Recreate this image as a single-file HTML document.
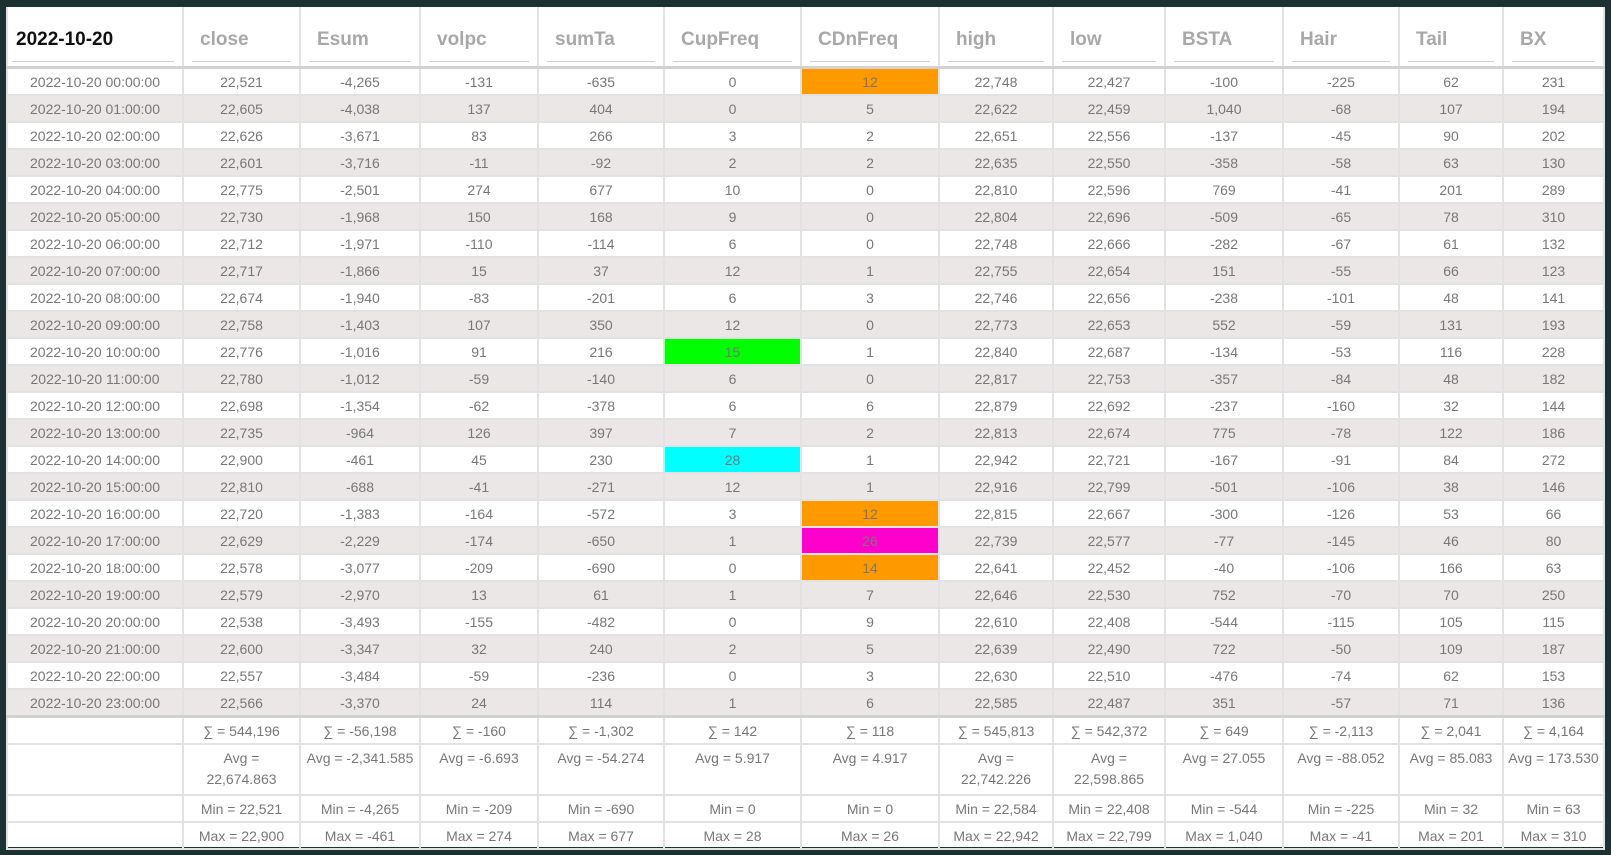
<!DOCTYPE html>
<html><head><meta charset="utf-8"><style>
html,body{margin:0;padding:0;background:#1c3232;width:1611px;height:855px;overflow:hidden}
.wrap{position:absolute;left:6px;top:7px;width:1597px;height:840px;background:#fff}
table{border-collapse:collapse;table-layout:fixed;width:1597px;font-family:"Liberation Sans",sans-serif}
td,th{border:2px solid #e2e2e2;padding:0;text-align:center;color:#777;font-size:14px;font-weight:normal;overflow:hidden;white-space:nowrap}
th{height:59px;border-top:none;border-bottom:3px solid #d2d2d2;vertical-align:top;text-align:left}
th div{margin:21px 8px 0 8px;padding:0 0 10px 8px;border-bottom:1px solid #d0d0d0;font-size:19px;font-weight:bold;color:#a8a8a8;height:23px;line-height:23px}
th.f div{color:#111;margin-left:4px;padding-left:4px}
tbody tr.d td{height:25px}
tbody tr.d:nth-child(even) td{background:#ebe7e6}
tr.last td{border-bottom:3px solid #d2d2d2}
.o{background:#ff9900!important}.m{background:#ff00cc!important}.g{background:#00ff00!important}.c{background:#00ffff!important}
tr.ft td{height:25px}
tr.avg td{height:46px;vertical-align:top;white-space:normal;line-height:21px;padding-top:3px}
</style></head><body><div class="wrap"><table>
<colgroup><col style="width:176px"><col style="width:117px"><col style="width:120px"><col style="width:118px"><col style="width:126px"><col style="width:137px"><col style="width:138px"><col style="width:114px"><col style="width:112px"><col style="width:118px"><col style="width:116px"><col style="width:104px"><col style="width:101px"></colgroup>
<thead><tr><th class="f"><div>2022-10-20</div></th><th><div>close</div></th><th><div>Esum</div></th><th><div>volpc</div></th><th><div>sumTa</div></th><th><div>CupFreq</div></th><th><div>CDnFreq</div></th><th><div>high</div></th><th><div>low</div></th><th><div>BSTA</div></th><th><div>Hair</div></th><th><div>Tail</div></th><th><div>BX</div></th></tr></thead>
<tbody>
<tr class="d"><td>2022-10-20 00:00:00</td><td>22,521</td><td>-4,265</td><td>-131</td><td>-635</td><td>0</td><td class="o">12</td><td>22,748</td><td>22,427</td><td>-100</td><td>-225</td><td>62</td><td>231</td></tr>
<tr class="d"><td>2022-10-20 01:00:00</td><td>22,605</td><td>-4,038</td><td>137</td><td>404</td><td>0</td><td>5</td><td>22,622</td><td>22,459</td><td>1,040</td><td>-68</td><td>107</td><td>194</td></tr>
<tr class="d"><td>2022-10-20 02:00:00</td><td>22,626</td><td>-3,671</td><td>83</td><td>266</td><td>3</td><td>2</td><td>22,651</td><td>22,556</td><td>-137</td><td>-45</td><td>90</td><td>202</td></tr>
<tr class="d"><td>2022-10-20 03:00:00</td><td>22,601</td><td>-3,716</td><td>-11</td><td>-92</td><td>2</td><td>2</td><td>22,635</td><td>22,550</td><td>-358</td><td>-58</td><td>63</td><td>130</td></tr>
<tr class="d"><td>2022-10-20 04:00:00</td><td>22,775</td><td>-2,501</td><td>274</td><td>677</td><td>10</td><td>0</td><td>22,810</td><td>22,596</td><td>769</td><td>-41</td><td>201</td><td>289</td></tr>
<tr class="d"><td>2022-10-20 05:00:00</td><td>22,730</td><td>-1,968</td><td>150</td><td>168</td><td>9</td><td>0</td><td>22,804</td><td>22,696</td><td>-509</td><td>-65</td><td>78</td><td>310</td></tr>
<tr class="d"><td>2022-10-20 06:00:00</td><td>22,712</td><td>-1,971</td><td>-110</td><td>-114</td><td>6</td><td>0</td><td>22,748</td><td>22,666</td><td>-282</td><td>-67</td><td>61</td><td>132</td></tr>
<tr class="d"><td>2022-10-20 07:00:00</td><td>22,717</td><td>-1,866</td><td>15</td><td>37</td><td>12</td><td>1</td><td>22,755</td><td>22,654</td><td>151</td><td>-55</td><td>66</td><td>123</td></tr>
<tr class="d"><td>2022-10-20 08:00:00</td><td>22,674</td><td>-1,940</td><td>-83</td><td>-201</td><td>6</td><td>3</td><td>22,746</td><td>22,656</td><td>-238</td><td>-101</td><td>48</td><td>141</td></tr>
<tr class="d"><td>2022-10-20 09:00:00</td><td>22,758</td><td>-1,403</td><td>107</td><td>350</td><td>12</td><td>0</td><td>22,773</td><td>22,653</td><td>552</td><td>-59</td><td>131</td><td>193</td></tr>
<tr class="d"><td>2022-10-20 10:00:00</td><td>22,776</td><td>-1,016</td><td>91</td><td>216</td><td class="g">15</td><td>1</td><td>22,840</td><td>22,687</td><td>-134</td><td>-53</td><td>116</td><td>228</td></tr>
<tr class="d"><td>2022-10-20 11:00:00</td><td>22,780</td><td>-1,012</td><td>-59</td><td>-140</td><td>6</td><td>0</td><td>22,817</td><td>22,753</td><td>-357</td><td>-84</td><td>48</td><td>182</td></tr>
<tr class="d"><td>2022-10-20 12:00:00</td><td>22,698</td><td>-1,354</td><td>-62</td><td>-378</td><td>6</td><td>6</td><td>22,879</td><td>22,692</td><td>-237</td><td>-160</td><td>32</td><td>144</td></tr>
<tr class="d"><td>2022-10-20 13:00:00</td><td>22,735</td><td>-964</td><td>126</td><td>397</td><td>7</td><td>2</td><td>22,813</td><td>22,674</td><td>775</td><td>-78</td><td>122</td><td>186</td></tr>
<tr class="d"><td>2022-10-20 14:00:00</td><td>22,900</td><td>-461</td><td>45</td><td>230</td><td class="c">28</td><td>1</td><td>22,942</td><td>22,721</td><td>-167</td><td>-91</td><td>84</td><td>272</td></tr>
<tr class="d"><td>2022-10-20 15:00:00</td><td>22,810</td><td>-688</td><td>-41</td><td>-271</td><td>12</td><td>1</td><td>22,916</td><td>22,799</td><td>-501</td><td>-106</td><td>38</td><td>146</td></tr>
<tr class="d"><td>2022-10-20 16:00:00</td><td>22,720</td><td>-1,383</td><td>-164</td><td>-572</td><td>3</td><td class="o">12</td><td>22,815</td><td>22,667</td><td>-300</td><td>-126</td><td>53</td><td>66</td></tr>
<tr class="d"><td>2022-10-20 17:00:00</td><td>22,629</td><td>-2,229</td><td>-174</td><td>-650</td><td>1</td><td class="m">26</td><td>22,739</td><td>22,577</td><td>-77</td><td>-145</td><td>46</td><td>80</td></tr>
<tr class="d"><td>2022-10-20 18:00:00</td><td>22,578</td><td>-3,077</td><td>-209</td><td>-690</td><td>0</td><td class="o">14</td><td>22,641</td><td>22,452</td><td>-40</td><td>-106</td><td>166</td><td>63</td></tr>
<tr class="d"><td>2022-10-20 19:00:00</td><td>22,579</td><td>-2,970</td><td>13</td><td>61</td><td>1</td><td>7</td><td>22,646</td><td>22,530</td><td>752</td><td>-70</td><td>70</td><td>250</td></tr>
<tr class="d"><td>2022-10-20 20:00:00</td><td>22,538</td><td>-3,493</td><td>-155</td><td>-482</td><td>0</td><td>9</td><td>22,610</td><td>22,408</td><td>-544</td><td>-115</td><td>105</td><td>115</td></tr>
<tr class="d"><td>2022-10-20 21:00:00</td><td>22,600</td><td>-3,347</td><td>32</td><td>240</td><td>2</td><td>5</td><td>22,639</td><td>22,490</td><td>722</td><td>-50</td><td>109</td><td>187</td></tr>
<tr class="d"><td>2022-10-20 22:00:00</td><td>22,557</td><td>-3,484</td><td>-59</td><td>-236</td><td>0</td><td>3</td><td>22,630</td><td>22,510</td><td>-476</td><td>-74</td><td>62</td><td>153</td></tr>
<tr class="d last"><td>2022-10-20 23:00:00</td><td>22,566</td><td>-3,370</td><td>24</td><td>114</td><td>1</td><td>6</td><td>22,585</td><td>22,487</td><td>351</td><td>-57</td><td>71</td><td>136</td></tr>
<tr class="ft"><td></td><td>∑ = 544,196</td><td>∑ = -56,198</td><td>∑ = -160</td><td>∑ = -1,302</td><td>∑ = 142</td><td>∑ = 118</td><td>∑ = 545,813</td><td>∑ = 542,372</td><td>∑ = 649</td><td>∑ = -2,113</td><td>∑ = 2,041</td><td>∑ = 4,164</td></tr>
<tr class="avg"><td></td><td>Avg =<br>22,674.863</td><td>Avg = -2,341.585</td><td>Avg = -6.693</td><td>Avg = -54.274</td><td>Avg = 5.917</td><td>Avg = 4.917</td><td>Avg =<br>22,742.226</td><td>Avg =<br>22,598.865</td><td>Avg = 27.055</td><td>Avg = -88.052</td><td>Avg = 85.083</td><td>Avg = 173.530</td></tr>
<tr class="ft"><td></td><td>Min = 22,521</td><td>Min = -4,265</td><td>Min = -209</td><td>Min = -690</td><td>Min = 0</td><td>Min = 0</td><td>Min = 22,584</td><td>Min = 22,408</td><td>Min = -544</td><td>Min = -225</td><td>Min = 32</td><td>Min = 63</td></tr>
<tr class="ft"><td></td><td>Max = 22,900</td><td>Max = -461</td><td>Max = 274</td><td>Max = 677</td><td>Max = 28</td><td>Max = 26</td><td>Max = 22,942</td><td>Max = 22,799</td><td>Max = 1,040</td><td>Max = -41</td><td>Max = 201</td><td>Max = 310</td></tr>
</tbody></table></div></body></html>
